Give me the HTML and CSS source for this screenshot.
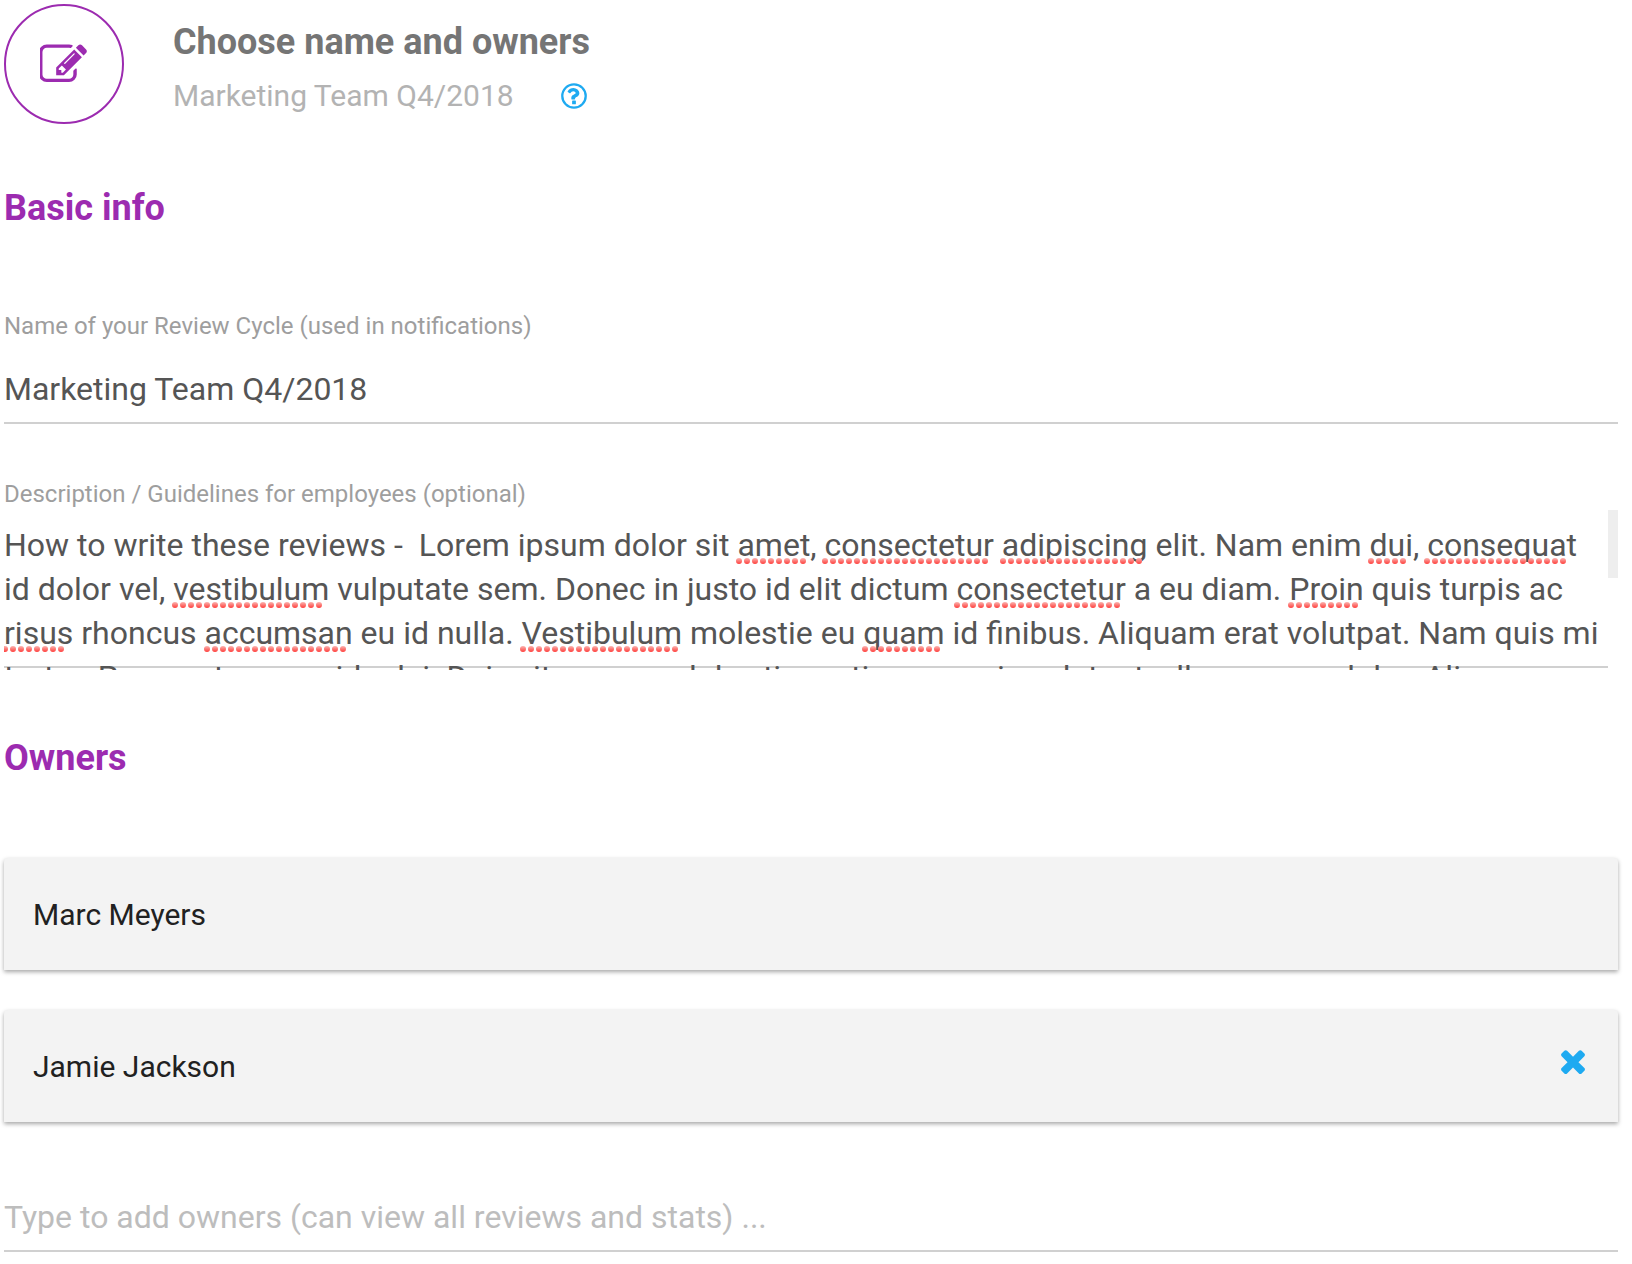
FILE: index.html
```html
<!DOCTYPE html>
<html lang="en">
<head>
    <meta charset="UTF-8">
    <meta name="viewport" content="width=device-width, initial-scale=1.0">
    <title>Choose name and owners</title>
    <link rel="stylesheet" href="styles.css">
</head>
<body>
    <main class="page">
        <header class="step-header">
            <div class="step-icon">
                <svg viewBox="36 -36 1792 1792" width="48" height="48" aria-hidden="true"><path d="M888 1184l116-116-152-152-116 116v56h96v96h56zm440-720q-16-16-33 1l-350 350q-17 17-1 33t33-1l350-350q17-17 1-33zm80 594v190q0 119-84.5 203.5t-203.5 84.5h-832q-119 0-203.5-84.5t-84.5-203.5v-832q0-119 84.5-203.5t203.5-84.5h832q63 0 117 25 15 7 18 23 3 17-9 29l-49 49q-14 14-32 8-23-6-45-6h-832q-66 0-113 47t-47 113v832q0 66 47 113t113 47h832q66 0 113-47t47-113v-126q0-13 9-22l64-64q15-15 35-7t20 29zm-96-738l288 288-672 672h-288v-288zm444 132l-92 92-288-288 92-92q28-28 68-28t68 28l152 152q28 28 28 68t-28 68z"/></svg>
            </div>
            <div class="step-text">
                <h1>Choose name and owners</h1>
                <div class="subtitle">
                    <span>Marketing Team Q4/2018</span>
                    <button class="icon-btn" type="button" aria-label="Help">
                        <svg viewBox="0 0 1792 1792" width="30" height="30" aria-hidden="true">
                            <circle cx="896" cy="896" r="700" fill="none" stroke="currentColor" stroke-width="136"/>
                            <path d="M1008 1200v160q0 14-9 23t-23 9h-160q-14 0-23-9t-9-23v-160q0-14 9-23t23-9h160q14 0 23 9t9 23zM1216 720q0 50-15 90t-45.500 69-52 44-59.500 36q-32 18-46.500 28t-26 24-11.500 29v32q0 14-9 23t-23 9h-160q-14 0-23-9t-9-23v-68q0-35 10.500-64.500t24-47.500 39-35.500 41-25.500 44.500-21q53-25 75-43t22-49q0-42-43.500-71.500t-95.500-29.500q-56 0-95 27-29 20-80 83-9 12-25 12-11 0-19-6l-108-82q-10-7-12-20t5-23q122-192 349-192 129 0 238.500 89.500t109.500 214.500z"/>
                        </svg>
                    </button>
                </div>
            </div>
        </header>

        <section class="basic-info">
            <h2>Basic info</h2>

            <div class="field">
                <label for="cycleName">Name of your Review Cycle (used in notifications)</label>
                <input id="cycleName" type="text" value="Marketing Team Q4/2018">
            </div>

            <div class="field">
                <label for="description">Description / Guidelines for employees (optional)</label>
                <div class="editor">
                    <textarea id="description" spellcheck="false">How to write these reviews -  Lorem ipsum dolor sit amet, consectetur adipiscing elit. Nam enim dui, consequat id dolor vel, vestibulum vulputate sem. Donec in justo id elit dictum consectetur a eu diam. Proin quis turpis ac risus rhoncus accumsan eu id nulla. Vestibulum molestie eu quam id finibus. Aliquam erat volutpat. Nam quis mi tortor. Praesent eu gravida dui. Duis vitae augue lobortis pretium mauris volutpat, ullamcorper dolor. Aliquam eu consequat erat volutpat. Nam enim dui, consequat id dolor vel, vestibulum vulputate sem. Donec in justo id elit dictum consectetur a eu diam. Proin quis turpis ac risus rhoncus accumsan eu id nulla. Vestibulum molestie eu quam id finibus. Aliquam erat volutpat. Lorem ipsum dolor sit amet, consectetur adipiscing elit.</textarea>
                    <!-- spelling marks, one dotted line per word -->
                    <svg class="spelling" aria-hidden="true">
                        <defs>
                            <linearGradient id="dot" gradientUnits="userSpaceOnUse" x1="0" y1="48" x2="0" y2="92" spreadMethod="repeat">
                                <stop offset="0" stop-color="#fbb4b0"/>
                                <stop offset="0.14" stop-color="#ff3b38"/>
                            </linearGradient>
                        </defs>
                        <path d="M735 51H800M821 51H982M999 51H1136M1367 51H1400M1423 51H1560"/>
                        <path d="M171 95H316M953 95H1114M1287 95H1352"/>
                        <path d="M1 139H58M203 139H340M519 139H672M861 139H934"/>
                    </svg>
                    <span class="scroll-thumb"></span>
                </div>
            </div>
        </section>

        <section class="owners">
            <h2>Owners</h2>

            <ul class="owner-list">
                <li class="owner-card">Marc Meyers</li>
                <li class="owner-card">
                    Jamie Jackson
                    <button class="icon-btn" type="button" aria-label="Remove Jamie Jackson">
                        <svg viewBox="0 256 1792 1792" width="36" height="36" aria-hidden="true"><path d="M1490 1322q0 40-28 68l-136 136q-28 28-68 28t-68-28l-294-294-294 294q-28 28-68 28t-68-28l-136-136q-28-28-28-68t28-68l294-294-294-294q-28-28-28-68t28-68l136-136q28-28 68-28t68 28l294 294 294-294q28-28 68-28t68 28l136 136q28 28 28 68t-28 68l-294 294 294 294q28 28 28 68z"/></svg>
                    </button>
                </li>
            </ul>

            <input type="text" aria-label="Add owners" placeholder="Type to add owners (can view all reviews and stats) ...">
        </section>
    </main>
</body>
</html>
```

FILE: styles.css
```css
* {
    box-sizing: border-box;
}
body {
    margin: 0;
    background: #fff;
    color: #212121;
    font-family: Roboto, "Liberation Sans", sans-serif;
    font-size: 30px;
}
.page {
    padding: 4px 14px 12px 4px;
}
h1, h2, ul {
    margin: 0;
    padding: 0;
}
h1, h2 {
    font-size: 36px;
    line-height: 44px;
    font-weight: bold;
}
h1 { color: #757575; }
h2 { color: #9c2bb0; }
svg {
    display: block;
    fill: currentColor;
}

/* Header */
.step-header {
    display: flex;
    gap: 49px;
}
.step-icon {
    display: flex;
    align-items: center;
    justify-content: center;
    width: 120px;
    height: 120px;
    border: 2px solid #9c2bb0;
    border-radius: 50%;
    color: #9c2bb0;
}
.step-text {
    padding-top: 16px;
}
.subtitle {
    display: flex;
    align-items: center;
    gap: 45px;
    margin-top: 10px;
    line-height: 44px;
    color: #b3b3b3;
}
.icon-btn {
    padding: 0;
    border: none;
    background: none;
    color: #1eaaf1;
    cursor: pointer;
}

/* Form fields */
.basic-info {
    margin-top: 62px;
}
.field {
    margin-top: 82px;
}
.field + .field {
    margin-top: 56px;
}
label {
    display: block;
    font-size: 24px;
    line-height: 28px;
    color: #9e9e9e;
}
input,
textarea {
    display: block;
    width: 100%;
    margin: 0;
    border: none;
    font-family: inherit;
    font-size: 32px;
    line-height: 44px;
    color: #555;
    outline: none;
}
input {
    height: 72px;
    padding: 12px 0 8px;
    border-bottom: 2px solid #d0d0d0;
    background: none;
}
input::placeholder {
    color: #bdbdbd;
    opacity: 1;
}
.field input {
    margin-top: 12px;
}

.editor {
    position: relative;
    margin-top: 2px;
}
.editor textarea {
    height: 160px;
    padding: 13px 10px 0 0;
    overflow: hidden;
    resize: none;
    /* the rule sits under the text, short of the scrollbar */
    background: linear-gradient(#d0d0d0, #d0d0d0) 0 156px / calc(100% - 10px) 2px no-repeat;
}
.spelling {
    position: absolute;
    top: 0;
    left: 0;
    width: 100%;
    height: 100%;
    fill: none;
    stroke: url(#dot);
    stroke-width: 6px;
    stroke-linecap: round;
    stroke-dasharray: 0 8;
    pointer-events: none;
}
.scroll-thumb {
    position: absolute;
    top: 0;
    right: 0;
    width: 10px;
    height: 68px;
    background: #eee;
}

/* Owners */
.owners {
    margin-top: 66px;
}
.owner-list {
    display: grid;
    gap: 40px;
    margin: 78px 0 58px;
    list-style: none;
}
.owner-card {
    display: flex;
    align-items: center;
    justify-content: space-between;
    height: 112px;
    padding: 0 27px 0 29px;
    border-radius: 4px 4px 0 0;
    background: #f3f3f3;
    box-shadow: 0 2px 4px rgba(0, 0, 0, 0.35);
}
```
